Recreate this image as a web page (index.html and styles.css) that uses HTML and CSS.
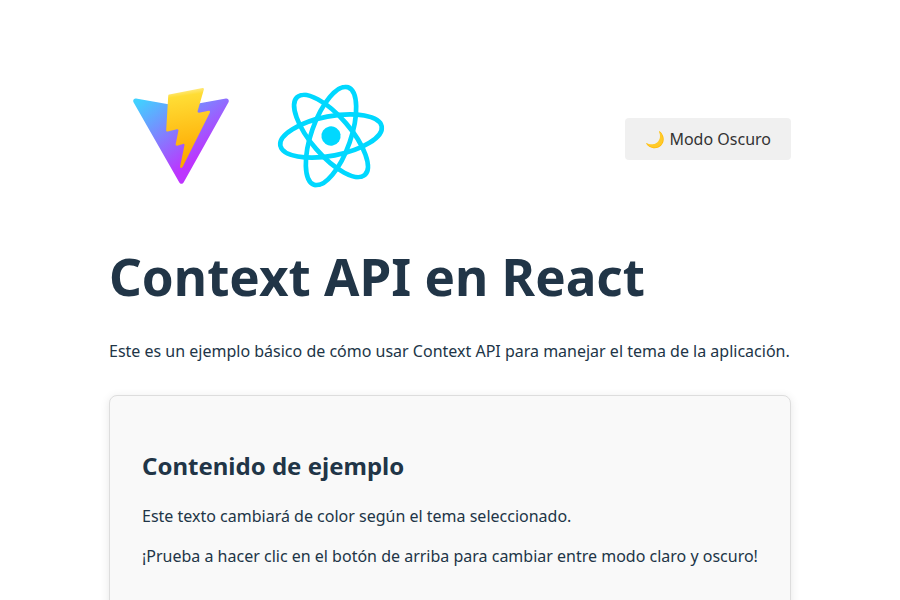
FILE: index.html
```html
<!DOCTYPE html>
<html lang="es">
<head>
<meta charset="UTF-8">
<title>Context API en React</title>
<link rel="stylesheet" href="styles.css">
</head>
<body>
<main class="app">
  <header class="header">
    <div class="logos">
      <svg class="logo" viewBox="0 0 256 257" preserveAspectRatio="xMidYMid">
        <defs>
          <linearGradient id="shield" x1="-.828%" x2="57.636%" y1="7.652%" y2="78.411%"><stop offset="0%" stop-color="#41D1FF"/><stop offset="100%" stop-color="#BD34FE"/></linearGradient>
          <linearGradient id="bolt" x1="43.376%" x2="50.316%" y1="2.242%" y2="89.03%"><stop offset="0%" stop-color="#FFEA83"/><stop offset="8.333%" stop-color="#FFDD35"/><stop offset="100%" stop-color="#FFA800"/></linearGradient>
        </defs>
        <path fill="url(#shield)" d="M255.153 37.938L134.897 252.976c-2.483 4.44-8.862 4.466-11.382.048L.875 37.958c-2.746-4.814 1.371-10.646 6.827-9.67l120.385 21.517a6.537 6.537 0 0 0 2.322-.004l117.867-21.483c5.438-.991 9.574 4.796 6.877 9.62Z"/>
        <path fill="url(#bolt)" d="M185.432.063L96.44 17.501a3.268 3.268 0 0 0-2.634 3.014l-5.474 92.456a3.268 3.268 0 0 0 3.997 3.378l24.777-5.718c2.318-.535 4.413 1.507 3.936 3.838l-7.361 36.047c-.495 2.426 1.782 4.5 4.151 3.78l15.304-4.649c2.372-.72 4.652 1.36 4.15 3.788l-11.698 56.621c-.732 3.542 3.979 5.473 5.943 2.437l1.313-2.028l72.516-144.72c1.215-2.423-.88-5.186-3.54-4.672l-25.505 4.922c-2.396.462-4.435-1.77-3.759-4.114l16.646-57.705c.677-2.35-1.37-4.583-3.769-4.113Z"/>
      </svg>
      <svg class="logo react" viewBox="-11.5 -10.23174 23 20.46348">
        <circle r="2.05" fill="#00d8ff"/>
        <g fill="none" stroke="#00d8ff">
          <ellipse rx="11" ry="4.2"/>
          <ellipse rx="11" ry="4.2" transform="rotate(60)"/>
          <ellipse rx="11" ry="4.2" transform="rotate(120)"/>
        </g>
      </svg>
    </div>
    <button class="toggle">🌙 Modo Oscuro</button>
  </header>
  <h1>Context API en React</h1>
  <p>Este es un ejemplo básico de cómo usar Context API para manejar el tema de la aplicación.</p>
  <section class="card">
    <h2>Contenido de ejemplo</h2>
    <p>Este texto cambiará de color según el tema seleccionado.</p>
    <p>¡Prueba a hacer clic en el botón de arriba para cambiar entre modo claro y oscuro!</p>
  </section>
</main>
</body>
</html>
```
FILE: styles.css
```css
html {
  overflow: hidden;
}

body {
  margin: 0;
  background: #fff;
  color: #213547;
  font: 16px/24px "Noto Sans", sans-serif;
}

.app {
  width: 682px;
  margin: 0 auto;
  padding-top: 64px;
}

.header {
  display: flex;
  justify-content: space-between;
  align-items: center;
  height: 150px;
}

.logos {
  display: flex;
  padding-bottom: 6px;
}

.logo {
  box-sizing: border-box;
  width: 144px;
  height: 144px;
  padding: 24px;
}

.react {
  width: 156px;
  transform: rotate(-10.8deg);
}

.toggle {
  height: 42px;
  padding: 0 20px;
  border: 0;
  border-radius: 4px;
  background: #f0f0f0;
  color: #333;
  font: inherit;
}

h1 {
  margin: 34px 0 35px;
  font-size: 51.2px;
  line-height: 56.3px;
}

p {
  margin: 16px 0;
}

.card {
  margin-top: 32px;
  padding: 32px;
  border: 1px solid #ddd;
  border-radius: 8px;
  background: #f9f9f9;
  box-shadow: 0 2px 10px rgba(0, 0, 0, 0.1);
}

h2 {
  margin: 20px 0;
  font-size: 24px;
  line-height: 36px;
}
```
